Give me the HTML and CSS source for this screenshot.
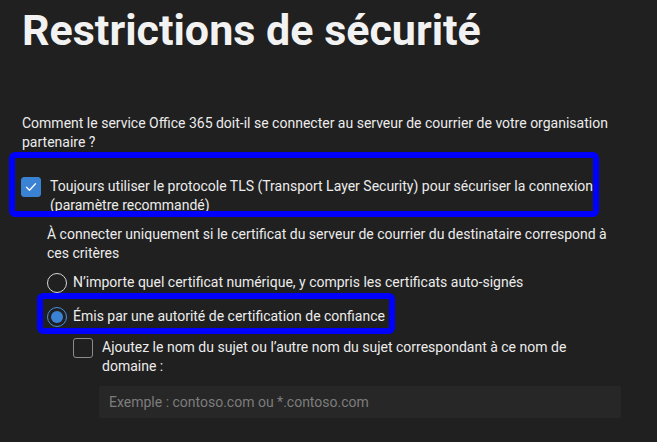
FILE: index.html
```html
<!DOCTYPE html>
<html lang="fr">
<head>
    <meta charset="UTF-8">
    <meta name="viewport" content="width=device-width, initial-scale=1.0">
    <title>Restrictions de sécurité</title>
    <link rel="stylesheet" href="styles.css">
</head>
<body>
    <div class="panel">
        <h1>Restrictions de sécurité</h1>

        <p class="question">Comment le service Office 365 doit-il se connecter au serveur de courrier de votre organisation partenaire ?</p>

        <label class="option option-tls highlight">
            <span class="checkbox checked">
                <svg width="20" height="20" viewBox="0 0 20 20"><path d="M5.5 10.2l3 3 6-6.4" fill="none" stroke="#fff" stroke-width="1.3" stroke-linecap="round" stroke-linejoin="round"/></svg>
            </span>
            <span class="option-text">Toujours utiliser le protocole TLS (Transport Layer Security) pour sécuriser la connexion (paramètre recommandé)</span>
        </label>

        <div class="sub">
            <p class="sub-text">À connecter uniquement si le certificat du serveur de courrier du destinataire correspond à ces critères</p>

            <label class="option radio-row">
                <span class="radio"></span>
                <span class="option-text">N’importe quel certificat numérique, y compris les certificats auto-signés</span>
            </label>

            <label class="option radio-row radio-trusted highlight">
                <span class="radio selected"></span>
                <span class="option-text">Émis par une autorité de certification de confiance</span>
            </label>

            <div class="nested">
                <label class="option option-domain">
                    <span class="checkbox"></span>
                    <span class="option-text">Ajoutez le nom du sujet ou l’autre nom du sujet correspondant à ce nom de domaine :</span>
                </label>
                <input class="domain-input" type="text" placeholder="Exemple : contoso.com ou *.contoso.com">
            </div>
        </div>
    </div>
</body>
</html>
```

FILE: styles.css
```css
body {
    margin: 0;
    background-color: #202020;
    color: #ececec;
    font-family: Roboto, "Liberation Sans", sans-serif;
    font-size: 14px;
    line-height: 19px;
}
.panel {
    padding: 0 42px 0 22px;
}
h1 {
    margin: 0;
    padding-top: 2px;
    font-size: 43px;
    line-height: 56px;
    font-weight: 700;
    color: #f2f2f2;
}
p {
    margin: 0;
}
.question {
    margin-top: 56px;
}
.option {
    position: relative;
    display: flex;
    align-items: flex-start;
}
.option-tls {
    margin-top: 25px;
    margin-left: -1px;
    gap: 9px;
}
.checkbox {
    flex: none;
    width: 20px;
    height: 20px;
    box-sizing: border-box;
    border: 1px solid #8c8c8c;
    border-radius: 3px;
}
.checkbox.checked {
    background-color: #3a82d4;
    border-color: #3a82d4;
}
.checkbox svg {
    display: block;
    margin: -1px;
}
.sub {
    margin-left: 25px;
    margin-top: 10px;
}
.radio-row {
    gap: 6px;
    width: fit-content;
}
.sub-text + .radio-row {
    margin-top: 10px;
}
.radio-trusted {
    margin-top: 14px;
}
.radio {
    flex: none;
    width: 20px;
    height: 20px;
    box-sizing: border-box;
    border: 1px solid #d6d6d6;
    border-radius: 50%;
    position: relative;
}
.radio.selected {
    border-color: #4a8fdc;
}
.radio.selected::after {
    content: "";
    position: absolute;
    left: 3px;
    top: 3px;
    width: 12px;
    height: 12px;
    border-radius: 50%;
    background-color: #3a82d4;
}
.nested {
    margin-left: 26px;
    margin-top: 11px;
}
.option-domain {
    gap: 9px;
}
.domain-input {
    display: block;
    margin: 10px 0 0 0;
    margin-left: 26px;
    width: 522px;
    height: 32px;
    box-sizing: border-box;
    padding: 0 10px;
    border: none;
    border-radius: 2px;
    background-color: #272727;
    color: #ececec;
    font-family: inherit;
    font-size: 14px;
    outline: none;
}
.domain-input::placeholder {
    color: #7d7d7d;
}

/* encadrés bleus par-dessus les options */
.highlight::after {
    content: "";
    position: absolute;
    box-sizing: border-box;
    border: 6px solid #0000ff;
    border-radius: 6px;
    pointer-events: none;
}
.option-tls::after {
    left: -12px;
    top: -25px;
    width: 590px;
    height: 65px;
}
.radio-trusted::after {
    left: -10px;
    top: -14px;
    right: -10px;
    height: 41px;
}
```
